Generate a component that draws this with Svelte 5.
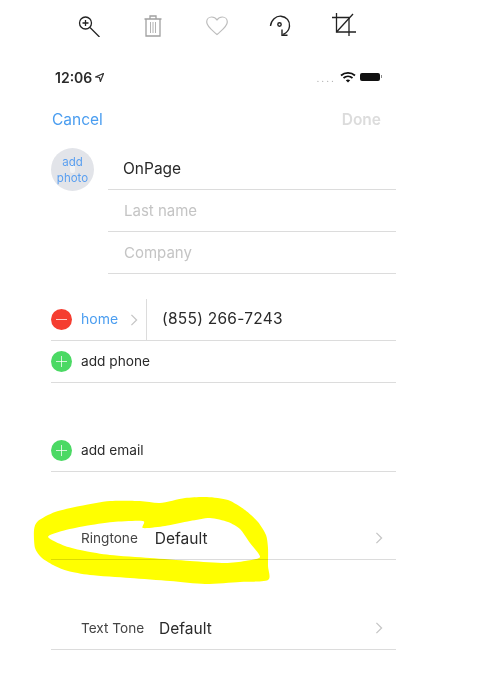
<script>
  const tools = ['zoom', 'trash', 'heart', 'rotate', 'crop'];
  const outer = [[34,530],[38,521],[55,512],[80,506],[110,501],[140,501],[160,503],[185,498],[207,497],[228,500],[245,510],[258,522],[266,535],[268,548],[268,566],[268,580],[240,582],[205,584],[170,581],[130,578],[90,575],[68,571],[55,566],[42,558],[35,548]];
  const inner = [[48,537],[62,531],[85,526],[113,522],[143,521],[143,528],[165,526],[190,521],[210,518],[228,522],[240,529],[250,543],[260,557],[245,561],[225,563],[190,561],[150,558],[110,555],[85,551],[65,546]];
  function smooth(p) {
    const n = p.length;
    let d = `M${p[0][0]} ${p[0][1]}`;
    for (let i = 0; i < n; i++) {
      const a = p[(i - 1 + n) % n], b = p[i], c = p[(i + 1) % n], e = p[(i + 2) % n];
      const c1 = [b[0] + (c[0] - a[0]) / 8, b[1] + (c[1] - a[1]) / 8];
      const c2 = [c[0] - (e[0] - b[0]) / 8, c[1] - (e[1] - b[1]) / 8];
      d += `C${c1[0]} ${c1[1]} ${c2[0]} ${c2[1]} ${c[0]} ${c[1]}`;
    }
    return d + 'Z';
  }
  const stroke = smooth(outer) + smooth(inner);
</script>

<div class="page">
  <div class="toolbar">
    {#each tools as t}
      <svg class="tool" viewBox="0 0 24 24" width="24" height="24" fill="none" stroke-width="1.3">
        {#if t === 'zoom'}
          <g stroke="#222">
            <circle cx="7.500" cy="10" r="6" />
            <path d="M4.500 10h6M7.500 7v6" />
            <path d="M12 14.500 21.500 24" />
          </g>
        {:else if t === 'trash'}
          <g stroke="#a0a0a0">
            <path d="M2.500 6h17M8 6V3h6v3" />
            <path d="M4 6v17h14V6" />
            <path d="M8.500 9v11M11 9v11M13.500 9v11" stroke-width="0.800" />
          </g>
        {:else if t === 'heart'}
          <path stroke="#bdbdbd" stroke-width="1.200" d="M12 21.500C7 17 1.700 13.500 1.700 9c0-3 2.300-5 5-5 2.200 0 4 1 5.300 3 1.300-2 3.100-3 5.300-3 2.700 0 5 2 5 5 0 4.500-5.300 8-10.300 12.500z" />
        {:else if t === 'rotate'}
          <g stroke="#222" stroke-width="1.400">
            <path d="M1.500 13C2 7 7 2.800 12 3.200c5.500.4 9 4.800 8.500 10-.4 3.700-2.700 6.500-6.300 8.300" />
            <circle cx="10.500" cy="11.500" r="1.700" />
            <path d="M13 16.500v5.700h5.500" />
          </g>
        {:else}
          <g stroke="#222">
            <path d="M0 4.500h17V23M4.500 0v19H24" />
            <path d="M4.500 19 21 1" />
          </g>
        {/if}
      </svg>
    {/each}
  </div>

  <div class="status">
    <div class="left">
      <span class="time">12:06</span>
      <svg viewBox="0 0 10 10" width="9" height="9"><path d="M0.500 4.500 9.500 0.500 6 9.500 5 5z" fill="none" stroke="#333" stroke-width="1.300" /></svg>
    </div>
    <div class="right">
      <span class="dots">....</span>
      <svg viewBox="0 0 16 12" width="16" height="12" fill="none" stroke="#111" stroke-width="1.800">
        <path d="M1 4.500c4-3.600 10-3.600 14 0M3.500 7c2.600-2.200 6.400-2.200 9 0" />
        <path d="M8 11.500 5.800 9.200c1.300-1 3.100-1 4.400 0z" fill="#111" stroke="none" />
      </svg>
      <span class="battery"></span>
    </div>
  </div>

  <div class="nav">
    <span class="cancel">Cancel</span>
    <span class="done">Done</span>
  </div>

  <div class="identity">
    <div class="avatar"><span>add<br />photo</span></div>
    <div class="fields">
      <div class="field first">OnPage</div>
      <div class="field placeholder">Last name</div>
      <div class="field placeholder">Company</div>
    </div>
  </div>

  <div class="row phone">
    <span class="badge red"><i></i></span>
    <span class="home">home</span>
    <svg class="chev small" viewBox="0 0 8 14" width="8" height="12"><path d="M1 1l6 6-6 6" /></svg>
    <span class="divider"></span>
    <span class="number">(855) 266-7243</span>
  </div>
  <div class="row add">
    <span class="badge green"><i></i><b></b></span>
    <span class="label">add phone</span>
  </div>

  <div class="row add email">
    <span class="badge green"><i></i><b></b></span>
    <span class="label">add email</span>
  </div>

  <div class="row tone ringtone">
    <span class="label">Ringtone</span>
    <span class="value">Default</span>
    <svg class="chev" viewBox="0 0 8 14" width="8" height="12"><path d="M1 1l6 6-6 6" /></svg>
  </div>

  <div class="row tone texttone">
    <span class="label">Text Tone</span>
    <span class="value">Default</span>
    <svg class="chev" viewBox="0 0 8 14" width="8" height="12"><path d="M1 1l6 6-6 6" /></svg>
  </div>

  <svg class="scribble" viewBox="0 0 504 700" width="504" height="700">
    <path fill="#ffff00" fill-rule="evenodd" d={stroke} />
  </svg>
</div>

<style>
  :global(body) {
    margin: 0;
    background: #fff;
  }
  .page {
    position: relative;
    width: 504px;
    height: 700px;
    overflow: hidden;
    box-sizing: border-box;
    padding-top: 13px;
    font-family: Inter, "Liberation Sans", sans-serif;
    color: #2a2a2a;
    filter: blur(0.45px);
  }
  .toolbar {
    display: flex;
    gap: 39.5px;
    padding-left: 78px;
    height: 24px;
  }
  .tool {
    flex: none;
  }
  .status {
    display: flex;
    justify-content: space-between;
    align-items: center;
    height: 16px;
    margin-top: 32px;
    padding: 0 122px 0 55px;
  }
  .left {
    display: flex;
    align-items: center;
    gap: 3px;
  }
  .time {
    font-size: 14px;
    font-weight: 600;
  }
  .right {
    display: flex;
    align-items: center;
    gap: 4px;
  }
  .dots {
    font-size: 10px;
    letter-spacing: 2px;
    color: #aaa;
    line-height: 8px;
    margin-top: 2px;
  }
  .battery {
    position: relative;
    display: block;
    width: 20px;
    height: 8px;
    background: #111;
    border-radius: 2px;
    margin-right: 2px;
  }
  .battery::after {
    content: "";
    position: absolute;
    right: -2px;
    top: 2px;
    width: 1px;
    height: 3px;
    background: #888;
  }
  .nav {
    display: flex;
    justify-content: space-between;
    align-items: center;
    height: 24px;
    margin-top: 22px;
    padding: 0 123px 0 52px;
    font-size: 15.500px;
  }
  .cancel {
    color: #4a9df0;
  }
  .done {
    color: #dcdcdc;
    font-weight: 600;
  }
  .identity {
    display: flex;
    margin: 7px 108px 0 51px;
    width: 345px;
  }
  .avatar {
    position: relative;
    flex: none;
    width: 43px;
    height: 43px;
    margin-top: 10px;
    border-radius: 50%;
    background: #e2e4e9;
    color: #5a9ff0;
    font-size: 11.500px;
    line-height: 16px;
    display: flex;
    align-items: center;
    justify-content: center;
    text-align: center;
  }
  .avatar span {
    position: relative;
  }
  .avatar::before {
    content: "";
    position: absolute;
    left: 19px;
    top: 16px;
    width: 5px;
    height: 9px;
    background: #f2f3f5;
    border-radius: 2px;
  }
  .fields {
    flex: 1;
    margin-left: 14px;
  }
  .field {
    display: flex;
    align-items: center;
    height: 41px;
    padding-left: 15px;
    border-bottom: 1px solid #dcdcdc;
    font-size: 15.500px;
  }
  .field.first {
    box-sizing: border-box;
    height: 52px;
    padding-top: 10px;
  }
  .placeholder {
    color: #c4c4c4;
    font-size: 15px;
    padding-left: 16px;
  }
  .row {
    display: flex;
    align-items: center;
    width: 345px;
    margin-left: 51px;
    box-sizing: border-box;
    border-bottom: 1px solid #dcdcdc;
  }
  .phone {
    height: 42px;
    margin-top: 25px;
  }
  .badge {
    position: relative;
    flex: none;
    width: 21px;
    height: 21px;
    border-radius: 50%;
  }
  .badge i,
  .badge b {
    position: absolute;
    background: rgba(255, 255, 255, 0.75);
  }
  .badge i {
    left: 5px;
    top: 10px;
    width: 11px;
    height: 1px;
  }
  .badge b {
    left: 10px;
    top: 5px;
    width: 1px;
    height: 11px;
  }
  .red {
    background: #f53d30;
  }
  .green {
    background: #4bd964;
  }
  .home {
    margin-left: 9px;
    margin-bottom: 2px;
    font-size: 14px;
    color: #4a9df0;
  }
  .chev {
    flex: none;
    fill: none;
    stroke: #c6c6c6;
    stroke-width: 1.500;
  }
  .chev.small {
    margin-left: 12px;
  }
  .divider {
    align-self: stretch;
    width: 1px;
    margin-left: 8px;
    background: #dcdcdc;
  }
  .number {
    margin-left: 15px;
    margin-bottom: 2px;
    font-size: 15.500px;
    letter-spacing: 0.25px;
  }
  .add {
    height: 42px;
  }
  .add .label {
    margin-left: 9px;
    margin-bottom: 2px;
    font-size: 13.700px;
  }
  .email {
    margin-top: 47px;
  }
  .tone {
    height: 44px;
    padding-left: 30px;
    padding-right: 13px;
    position: relative;
  }
  .tone .label {
    margin-top: 1px;
    font-size: 13.600px;
    color: #444;
  }
  .tone .value {
    margin-left: 16px;
    margin-top: 1px;
    font-size: 15.500px;
  }
  .tone .chev {
    margin-left: auto;
  }
  .ringtone {
    margin-top: 44px;
    height: 44px;
  }
  .ringtone .value {
    margin-left: 17px;
  }
  .texttone {
    margin-top: 46px;
  }
  .texttone .value {
    margin-left: 15px;
  }
  .scribble {
    position: absolute;
    left: 0;
    top: 0;
    mix-blend-mode: multiply;
  }
</style>
